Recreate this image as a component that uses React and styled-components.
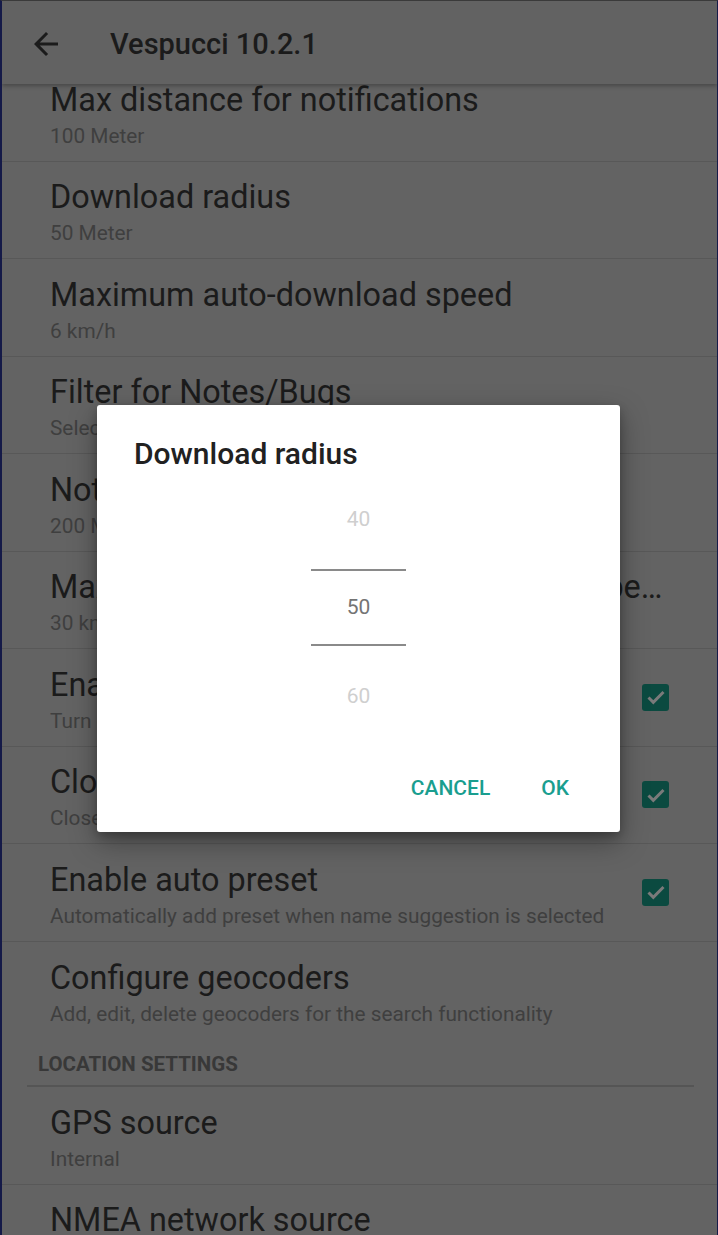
import React from "react";
import styled, { createGlobalStyle } from "styled-components";

const GlobalStyle = createGlobalStyle`
  html, body {
    margin: 0;
    padding: 0;
    background: #161a45;
  }
  body {
    font-family: Roboto, "Noto Sans", "Liberation Sans", sans-serif;
    overflow: hidden;
  }
`;

const Screen = styled.div`
  width: 718px;
  height: 1235px;
  box-sizing: border-box;
  border-left: 2px solid #151a48;
  border-right: 1px solid #151a48;
  border-top: 1px solid #3a3a3a;
  background: #636363;
  overflow: hidden;
  position: relative;
`;

const AppBar = styled.header`
  position: relative;
  z-index: 2;
  height: 83px;
  display: flex;
  align-items: center;
  background: #626262;
  box-shadow: 0 2px 4px rgba(0, 0, 0, 0.28);
`;

const BackButton = styled.button`
  border: 0;
  background: none;
  padding: 0;
  margin: 2px 0 0 26px;
  width: 36px;
  height: 36px;
  display: flex;
  align-items: center;
  justify-content: center;
  svg {
    width: 36px;
    height: 36px;
    fill: #1b1b1b;
  }
`;

const BarTitle = styled.h1`
  margin: 2px 0 0 46px;
  font-size: 29px;
  font-weight: 500;
  color: #1b1b1b;
`;

const List = styled.div`
  margin-top: -20px;
`;

const Row = styled.div`
  display: flex;
  align-items: center;
  height: 97.5px;
  box-sizing: border-box;
  padding: 0 50px 0 48px;
  border-bottom: ${(p) => (p.last ? "none" : "1px solid #585858")};
`;

const RowText = styled.div`
  flex: 1;
  min-width: 0;
  padding-top: 6px;
`;

const Title = styled.div`
  font-size: 32.4px;
  line-height: 38px;
  color: #1b1b1b;
  white-space: nowrap;
  overflow: hidden;
  text-overflow: ellipsis;
`;

const Summary = styled.div`
  font-size: 20.8px;
  line-height: 28px;
  margin-top: 3px;
  color: #3f3f3f;
  white-space: nowrap;
  overflow: hidden;
  text-overflow: ellipsis;
`;

const Check = styled.div`
  flex: none;
  width: 27px;
  height: 27px;
  margin-left: 24px;
  margin-right: -2px;
  border-radius: 3px;
  background: #0b4a40;
  display: flex;
  align-items: center;
  justify-content: center;
  svg {
    width: 24px;
    height: 24px;
  }
`;

const Category = styled.div`
  margin: 0 23px 0 25px;
  padding: 13px 0 0 11px;
  height: 48px;
  box-sizing: border-box;
  border-bottom: 2px solid #555555;
  font-size: 20.5px;
  font-weight: 700;
  line-height: 24px;
  color: #383838;
`;

const Overlay = styled.div`
  position: absolute;
  inset: 0;
  z-index: 5;
  display: flex;
  align-items: center;
  justify-content: center;
  padding-right: 2px;
`;

const Dialog = styled.div`
  width: 523px;
  height: 427px;
  box-sizing: border-box;
  background: #ffffff;
  border-radius: 3px;
  box-shadow: 0 10px 28px rgba(0, 0, 0, 0.35), 0 4px 10px rgba(0, 0, 0, 0.22);
  display: flex;
  flex-direction: column;
  padding: 31px 0 0;
`;

const DialogTitle = styled.h2`
  margin: 0 0 0 37px;
  font-size: 30px;
  line-height: 36px;
  font-weight: 500;
  color: #212121;
`;

const Picker = styled.div`
  align-self: center;
  width: 95px;
  margin-top: -3px;
  display: flex;
  flex-direction: column;
  align-items: center;
`;

const PickerValue = styled.div`
  height: ${(p) => (p.selected ? "73px" : "100px")};
  display: flex;
  align-items: center;
  justify-content: center;
  width: 100%;
  font-size: 21px;
  color: ${(p) => (p.selected ? "#747474" : "#cfcfcf")};
  border-top: ${(p) => (p.selected ? "2px solid #8a8a8a" : "none")};
  border-bottom: ${(p) => (p.selected ? "2px solid #8a8a8a" : "none")};
`;

const Buttons = styled.div`
  margin-top: auto;
  display: flex;
  justify-content: flex-end;
  gap: 19px;
  padding: 0 35px 27px 0;
`;

const TextButton = styled.button`
  border: 0;
  background: none;
  padding: 0 16px;
  height: 34px;
  font-family: inherit;
  font-size: 21px;
  font-weight: 500;
  color: #1a9e8f;
  text-transform: uppercase;
`;

const ArrowBack = () => (
  <svg viewBox="0 0 24 24">
    <path d="M20 11H7.83l5.59-5.59L12 4l-8 8 8 8 1.41-1.41L7.83 13H20v-2z" />
  </svg>
);

const CheckMark = () => (
  <svg viewBox="0 0 24 24">
    <path d="M4.5 12.5l4.8 4.8L19.5 7" fill="none" stroke="#7a7a7a" strokeWidth="3" />
  </svg>
);

const general = [
  { title: "Max distance for notifications", summary: "100 Meter" },
  { title: "Download radius", summary: "50 Meter" },
  { title: "Maximum auto-download speed", summary: "6 km/h" },
  { title: "Filter for Notes/Bugs", summary: "Select which Notes/Bugs to display" },
  { title: "Notes/Bugs download radius", summary: "200 Meter" },
  { title: "Maximum Notes and Bugs download speed limit", summary: "30 km/h" },
  { title: "Enable name suggestions", summary: "Turn on name suggestions", checked: true },
  { title: "Close changeset on upload", summary: "Close the changeset after upload", checked: true },
  { title: "Enable auto preset", summary: "Automatically add preset when name suggestion is selected", checked: true },
  { title: "Configure geocoders", summary: "Add, edit, delete geocoders for the search functionality", last: true },
];

const location = [
  { title: "GPS source", summary: "Internal" },
  { title: "NMEA network source", summary: "localhost:1958" },
];

const Pref = ({ item }) => (
  <Row last={item.last}>
    <RowText>
      <Title>{item.title}</Title>
      <Summary>{item.summary}</Summary>
    </RowText>
    {item.checked && (
      <Check>
        <CheckMark />
      </Check>
    )}
  </Row>
);

export default function App() {
  return (
    <>
      <GlobalStyle />
      <Screen>
        <AppBar>
          <BackButton aria-label="Back">
            <ArrowBack />
          </BackButton>
          <BarTitle>Vespucci 10.2.1</BarTitle>
        </AppBar>
        <List>
          {general.map((item) => (
            <Pref key={item.title} item={item} />
          ))}
          <Category>LOCATION SETTINGS</Category>
          {location.map((item) => (
            <Pref key={item.title} item={item} />
          ))}
        </List>
        <Overlay>
          <Dialog>
            <DialogTitle>Download radius</DialogTitle>
            <Picker>
              <PickerValue>40</PickerValue>
              <PickerValue selected>50</PickerValue>
              <PickerValue>60</PickerValue>
            </Picker>
            <Buttons>
              <TextButton>Cancel</TextButton>
              <TextButton>OK</TextButton>
            </Buttons>
          </Dialog>
        </Overlay>
      </Screen>
    </>
  );
}
